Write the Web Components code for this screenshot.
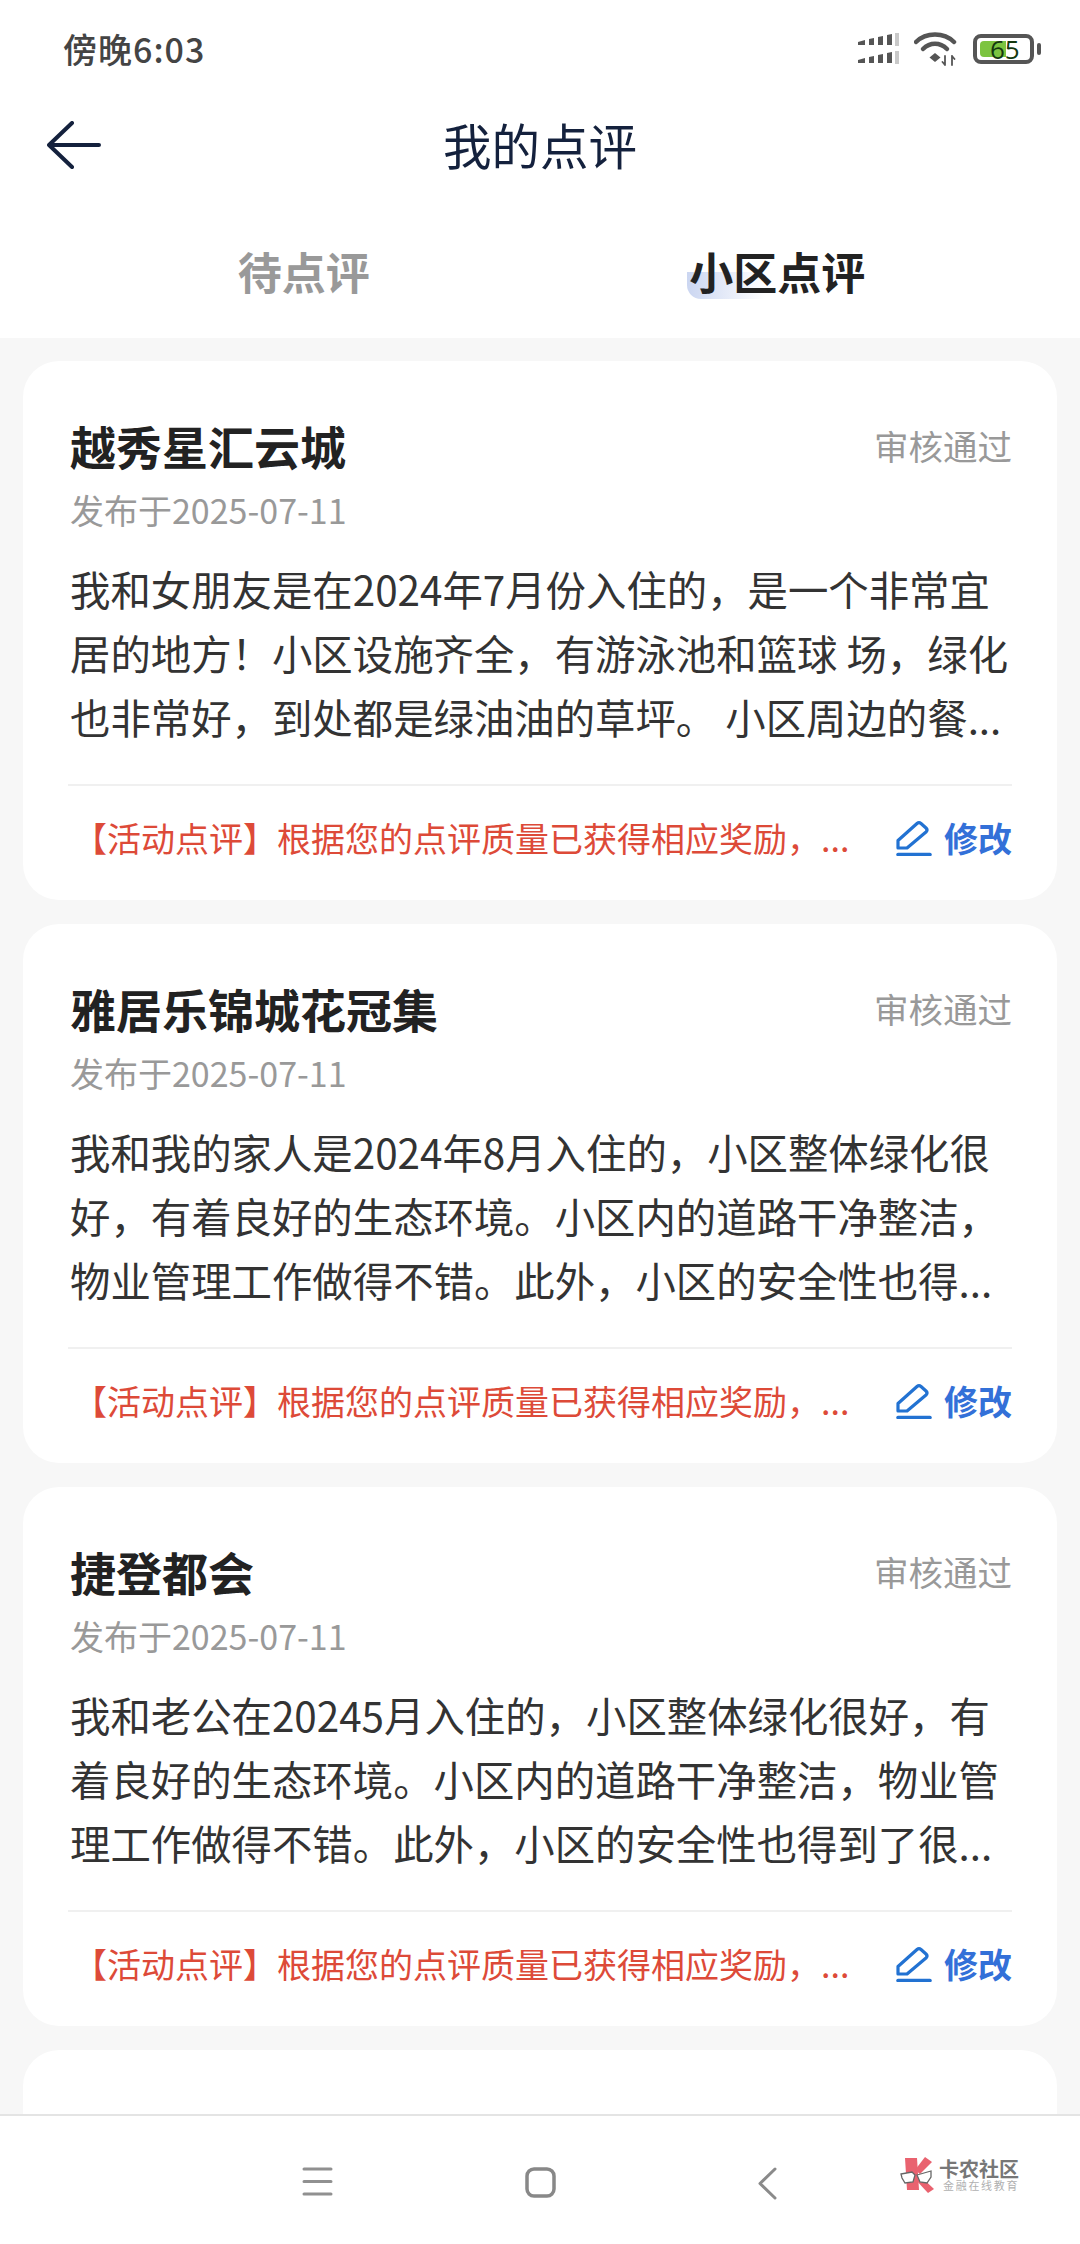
<!DOCTYPE html>
<html lang="zh">
<head>
<meta charset="utf-8">
<title>我的点评</title>
<style>
    html, body { margin: 0; padding: 0; }
    body {
        width: 1080px;
        height: 2244px;
        overflow: hidden;
        position: relative;
        background: #f7f7f7;
        font-family: 'Noto Sans CJK SC', 'Noto Sans', sans-serif;
    }
    .list {
        display: flex;
        flex-direction: column;
        gap: 24px;
        padding: 23px 23px 0;
    }
</style>
</head>
<body>
<status-bar time="傍晚6:03" battery="65"></status-bar>
<nav-header>我的点评</nav-header>
<tab-bar></tab-bar>
<div class="list">
    <review-card name="越秀星汇云城" date="发布于2025-07-11" status="审核通过" note="【活动点评】根据您的点评质量已获得相应奖励，...">我和女朋友是在2024年7月份入住的，是一个非常宜居的地方！小区设施齐全，有游泳池和篮球 场，绿化也非常好，到处都是绿油油的草坪。 小区周边的餐...</review-card>
    <review-card name="雅居乐锦城花冠集" date="发布于2025-07-11" status="审核通过" note="【活动点评】根据您的点评质量已获得相应奖励，...">我和我的家人是2024年8月入住的，小区整体绿化很好，有着良好的生态环境。小区内的道路干净整洁，物业管理工作做得不错。此外，小区的安全性也得...</review-card>
    <review-card name="捷登都会" date="发布于2025-07-11" status="审核通过" note="【活动点评】根据您的点评质量已获得相应奖励，...">我和老公在20245月入住的，小区整体绿化很好，有着良好的生态环境。小区内的道路干净整洁，物业管理工作做得不错。此外，小区的安全性也得到了很...</review-card>
    <review-card name="京华苑" partial></review-card>
</div>
<bottom-nav></bottom-nav>

<script>
const statusTemplate = document.createElement('template');
statusTemplate.innerHTML = `
    <style>
        :host {
            display: flex;
            align-items: center;
            justify-content: space-between;
            box-sizing: border-box;
            height: 97px;
            padding: 0 39px 0 63px;
            background: #fff;
        }
        .time {
            font-size: 34px;
            font-weight: 500;
            letter-spacing: 1px;
            color: #444;
            line-height: 40px;
        }
        .icons {
            display: flex;
            align-items: center;
            gap: 15px;
        }
        svg { display: block; }
        .battery {
            position: relative;
            width: 68px;
            height: 30px;
        }
        .battery b {
            position: absolute;
            left: 17px;
            top: 0;
            font: 400 26px/30px 'Open Sans', sans-serif;
            color: #14380f;
        }
    </style>
    <div class="time"></div>
    <div class="icons">
        <svg width="41" height="32" viewBox="0 0 41 32">
            <g fill="#555">
                <path d="M0 9l7-2v5H0zM11 6l5-1v7h-5zM20 4l5-1v9h-5zM29 2l5-1v11h-5z"/>
                <path d="M0 27l7-2v5H0zM11 24l5-1v7h-5zM20 22l5-1v9h-5zM29 20l5-1v11h-5z"/>
            </g>
            <path d="M37 0h4v13h-4zM37 18h4v13h-4z" fill="#c9c9c9"/>
        </svg>
        <svg width="44" height="34" viewBox="0 0 44 34" fill="none" stroke="#555" stroke-linecap="round">
            <path d="M2 10C12 0 30 0 40 10" stroke-width="4.5"/>
            <path d="M9 17C16 10 26 10 33 17" stroke-width="4.5"/>
            <path d="M21 21l5.500 4.500L21 30l-5.500-4.500z" fill="#555" stroke="none"/>
            <path d="M31 24v9M28.500 30l2.500 3M38 24v9M38 24l2.500 3" stroke-width="1.800"/>
        </svg>
        <div class="battery">
            <svg width="68" height="30" viewBox="0 0 68 30">
                <rect x="2" y="2" width="57" height="26" rx="6" fill="#fff" stroke="#555" stroke-width="4"/>
                <path d="M11 7h22v16H11a4 4 0 0 1-4-4v-8a4 4 0 0 1 4-4z" fill="#7cc440"/>
                <rect x="64" y="9" width="4" height="12" rx="2" fill="#555"/>
            </svg>
            <b></b>
        </div>
    </div>
`;

class StatusBar extends HTMLElement {
    constructor() {
        super();
        this.attachShadow({mode: 'open'});
        this.shadowRoot.appendChild(statusTemplate.content.cloneNode(true));
        this.$('.time').textContent = this.getAttribute('time');
        this.$('b').textContent = this.getAttribute('battery');
    }

    $(name) {
        return this.shadowRoot.querySelector(name);
    }
}
customElements.define('status-bar', StatusBar);

const headerTemplate = document.createElement('template');
headerTemplate.innerHTML = `
    <style>
        :host {
            display: grid;
            grid-template-columns: 1fr auto 1fr;
            align-items: center;
            height: 96px;
            padding: 0 47px;
            background: #fff;
        }
        svg { display: block; }
        h1 {
            margin: -2px 0 0;
            font-size: 48.500px;
            font-weight: 400;
            line-height: 64px;
            color: #14213d;
        }
    </style>
    <svg width="54" height="48" viewBox="0 0 54 48" fill="none" stroke="#14213d" stroke-width="4" stroke-linecap="round" stroke-linejoin="round">
        <path d="M25 2L2 24l23 22M2 24h50"/>
    </svg>
    <h1><slot></slot></h1>
`;

class NavHeader extends HTMLElement {
    constructor() {
        super();
        this.attachShadow({mode: 'open'});
        this.shadowRoot.appendChild(headerTemplate.content.cloneNode(true));
    }
}
customElements.define('nav-header', NavHeader);

const tabsTemplate = document.createElement('template');
tabsTemplate.innerHTML = `
    <style>
        :host {
            display: grid;
            grid-template-columns: 1fr 1fr;
            box-sizing: border-box;
            height: 145px;
            padding: 0 66px 0 67px;
            background: #fff;
        }
        div {
            justify-self: center;
            position: relative;
            margin-top: 46px;
            height: 64px;
            font-size: 44px;
            font-weight: 700;
            line-height: 64px;
            color: #999;
        }
        .on { color: #222; }
        span { position: relative; }
        .on::before {
            content: '';
            position: absolute;
            left: -2px;
            top: 33px;
            width: 78px;
            height: 27px;
            border-radius: 0 0 0 14px;
            background: linear-gradient(90deg, #cbd6f1, rgba(203, 214, 241, 0));
        }
    </style>
    <div><span>待点评</span></div>
    <div class="on"><span>小区点评</span></div>
`;

class TabBar extends HTMLElement {
    constructor() {
        super();
        this.attachShadow({mode: 'open'});
        this.shadowRoot.appendChild(tabsTemplate.content.cloneNode(true));
    }
}
customElements.define('tab-bar', TabBar);

const cardTemplate = document.createElement('template');
cardTemplate.innerHTML = `
    <style>
        :host {
            display: block;
            box-sizing: border-box;
            height: 539px;
            padding: 53px 45px 0;
            border-radius: 36px;
            background: #fff;
        }
        :host([partial]) { height: 130px; }
        :host([partial]) .date,
        :host([partial]) .body,
        :host([partial]) .foot,
        :host([partial]) .status { display: none; }
        .top {
            display: flex;
            justify-content: space-between;
            align-items: center;
            height: 62px;
            padding-left: 2px;
        }
        h2 {
            margin: 0;
            font-size: 46px;
            font-weight: 700;
            line-height: 62px;
            color: #222;
        }
        .status {
            font-size: 34.500px;
            line-height: 48px;
            color: #999;
        }
        .date {
            margin-top: 10px;
            padding-left: 2px;
            font-size: 34px;
            line-height: 48px;
            color: #999;
        }
        .body {
            margin-top: 23px;
            padding-left: 2px;
            height: 192px;
            font-size: 40.400px;
            line-height: 64px;
            color: #333;
        }
        .foot {
            display: flex;
            align-items: center;
            justify-content: space-between;
            box-sizing: border-box;
            height: 116px;
            margin-top: 35px;
            padding: 0 0 10px 5px;
            border-top: 2px solid #f0f0f0;
        }
        .note {
            font-size: 34px;
            line-height: 48px;
            color: #dd4a38;
            white-space: nowrap;
        }
        .edit {
            display: flex;
            align-items: center;
            gap: 12px;
            font-size: 34px;
            font-weight: 700;
            line-height: 48px;
            color: #3370d8;
        }
        svg { display: block; }
    </style>
    <div class="top">
        <h2></h2>
        <span class="status"></span>
    </div>
    <div class="date"></div>
    <div class="body"><slot></slot></div>
    <div class="foot">
        <span class="note"></span>
        <span class="edit">
            <svg width="36" height="36" viewBox="0 0 36 36" fill="none" stroke="#2272d2" stroke-linejoin="round" stroke-linecap="round">
                <path d="M2 20.500L21 3.500Q23 1.800 25 3.500L30 8Q32 10 30 12L11 28H2z" stroke-width="3.200"/>
                <path d="M2 34.500h32" stroke-width="3.500"/>
            </svg>
            修改
        </span>
    </div>
`;

class ReviewCard extends HTMLElement {
    constructor() {
        super();
        this.attachShadow({mode: 'open'});
        this.shadowRoot.appendChild(cardTemplate.content.cloneNode(true));
        this.$('h2').textContent = this.getAttribute('name');
        this.$('.status').textContent = this.getAttribute('status');
        this.$('.date').textContent = this.getAttribute('date');
        this.$('.note').textContent = this.getAttribute('note');
    }

    $(name) {
        return this.shadowRoot.querySelector(name);
    }
}
customElements.define('review-card', ReviewCard);

const bottomTemplate = document.createElement('template');
bottomTemplate.innerHTML = `
    <style>
        :host {
            position: absolute;
            left: 0;
            right: 0;
            bottom: 0;
            box-sizing: border-box;
            height: 130px;
            padding: 51px 0 0 302px;
            display: flex;
            align-items: flex-start;
            background: #fff;
            border-top: 2px solid #e4e4e4;
        }
        svg { display: block; }
        .home { margin-left: 192px; }
        .back { margin-left: 202px; }
        .logo {
            position: absolute;
            left: 900px;
            top: 40px;
            display: flex;
            gap: 3px;
        }
        .brand {
            margin-top: 3px;
            font-size: 20px;
            font-weight: 700;
            line-height: 19px;
            color: #777;
        }
        .sub {
            padding-left: 4px;
            font-size: 11px;
            line-height: 14px;
            letter-spacing: 1.700px;
            color: #b0b0b0;
        }
    </style>
    <svg width="31" height="29" viewBox="0 0 31 29" stroke="#909090" stroke-width="3" stroke-linecap="round">
        <path d="M2 2h27M2 14.500h27M2 27h27"/>
    </svg>
    <svg class="home" width="31" height="31" viewBox="0 0 31 31" fill="none" stroke="#888" stroke-width="3.500">
        <rect x="2" y="2" width="27" height="27" rx="7"/>
    </svg>
    <svg class="back" width="19" height="33" viewBox="0 0 19 33" fill="none" stroke="#8a8a8a" stroke-width="3" stroke-linecap="round" stroke-linejoin="round">
        <path d="M17 2L2 16.500 17 31"/>
    </svg>
    <div class="logo">
        <svg width="36" height="37" viewBox="0 0 36 37">
            <path d="M5 2h12l2 32H7z" fill="#e9626f"/>
            <path d="M25 1l7 5-12 12-5-4z" fill="#e9626f"/>
            <path d="M17 17l17 16-6 4-14-15z" fill="#e9626f"/>
            <path d="M1 18l11-2 3 3-2 7-8 1-3-5z" fill="#fff" stroke="#666" stroke-width="1.300"/>
            <path d="M17 19l14-4v6l-4 6-7-1z" fill="#fff" stroke="#666" stroke-width="1.300"/>
        </svg>
        <div>
            <div class="brand">卡农社区</div>
            <div class="sub">金融在线教育</div>
        </div>
    </div>
`;

class BottomNav extends HTMLElement {
    constructor() {
        super();
        this.attachShadow({mode: 'open'});
        this.shadowRoot.appendChild(bottomTemplate.content.cloneNode(true));
    }
}
customElements.define('bottom-nav', BottomNav);
</script>
</body>
</html>
